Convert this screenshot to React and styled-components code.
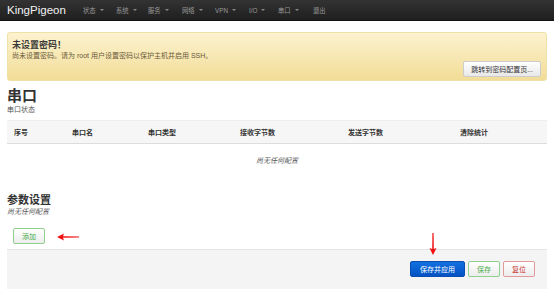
import React from "react";
import styled, { createGlobalStyle } from "styled-components";

const GlobalStyle = createGlobalStyle`
  body {
    margin: 0;
    background: #fff;
    font-family: "Liberation Sans", "Noto Sans CJK SC", sans-serif;
    color: #333;
  }
`;

const Page = styled.div`
  position: relative;
  width: 554px;
  height: 290px;
  overflow: hidden;
`;

const Navbar = styled.div`
  display: flex;
  align-items: center;
  height: 21px;
  padding-left: 7px;
  background: linear-gradient(#333, #1f1f1f);
  border-bottom: 1px solid #111;
  box-sizing: border-box;
`;

const Brand = styled.div`
  font-size: 11.5px;
  color: #f2f2f2;
  width: 76px;
`;

const Menu = styled.div`
  display: flex;
  align-items: center;
`;

const MenuItem = styled.div`
  display: flex;
  align-items: center;
  gap: 4px;
  font-size: 6.3px;
  color: #9a9a9a;
  width: ${({ w }) => w}px;
`;

const Caret = styled.span`
  width: 0;
  height: 0;
  border-left: 2px solid transparent;
  border-right: 2px solid transparent;
  border-top: 2px solid #888;
`;

const Main = styled.div`
  padding: 11px 7px 0;
`;

const Alert = styled.div`
  display: flex;
  flex-direction: column;
  height: 49px;
  box-sizing: border-box;
  padding: 7px 5px 3px 4px;
  background: linear-gradient(#fcf2cf, #f2dd97);
  border: 1px solid #efe0a8;
  border-radius: 3px;
`;

const AlertTitle = styled.div`
  font-size: 9px;
  font-weight: bold;
  color: #3a3a3a;
  line-height: 11px;
`;

const AlertText = styled.div`
  font-size: 7px;
  color: #6a5a3a;
  margin-top: 1px;
  line-height: 8px;
`;

const AlertActions = styled.div`
  display: flex;
  justify-content: flex-end;
  margin-top: auto;
`;

const Button = styled.div`
  display: flex;
  align-items: center;
  justify-content: center;
  height: 16px;
  box-sizing: border-box;
  padding: 0 ${({ pad }) => pad ?? 6}px;
  font-size: 7px;
  border-radius: 2px;
  border: 1px solid ${({ border }) => border};
  color: ${({ color }) => color};
  background: ${({ bg }) => bg};
`;

const Heading = styled.div`
  font-size: 15px;
  font-weight: bold;
  color: #333;
  margin-top: 6px;
  line-height: 18px;
`;

const SubHeading = styled.div`
  font-size: 11px;
  font-weight: bold;
  color: #333;
  line-height: 13px;
`;

const Desc = styled.div`
  font-size: 7px;
  color: #555;
  line-height: 9px;
  font-style: ${({ italic }) => (italic ? "italic" : "normal")};
`;

const TableHead = styled.div`
  display: grid;
  grid-template-columns: 58px 76px 92px 108px 112px 1fr;
  align-items: center;
  height: 22px;
  margin-top: 6px;
  padding-left: 7px;
  background: #f6f6f6;
  border-top: 1px solid #eee;
  border-bottom: 1px solid #ddd;
  font-size: 7px;
  font-weight: bold;
  color: #333;
`;

const Empty = styled.div`
  text-align: center;
  font-size: 7px;
  font-style: italic;
  color: #555;
  padding: 12px 0 0;
  line-height: 9px;
`;

const Section = styled.div`
  margin-top: 29px;
`;

const AddRow = styled.div`
  display: flex;
  padding: 12px 0 0 6px;
`;

const Footer = styled.div`
  display: flex;
  justify-content: flex-end;
  gap: 3px;
  height: 40px;
  margin-top: 5px;
  padding: 11px 12px 0 0;
  box-sizing: border-box;
  background: #f4f4f4;
  border-top: 1px solid #e4e4e4;
`;

const Arrow = styled.svg`
  position: absolute;
  left: ${({ x }) => x}px;
  top: ${({ y }) => y}px;
`;

const menu = [
  ["状态", true, 33],
  ["系统", true, 32],
  ["服务", true, 34],
  ["网络", true, 33],
  ["VPN", true, 34],
  ["I/O", true, 29],
  ["串口", true, 35],
  ["退出", false, 30],
];

const columns = ["序号", "串口名", "串口类型", "接收字节数", "发送字节数", "清除统计"];

export default function App() {
  return (
    <Page>
      <GlobalStyle />
      <Navbar>
        <Brand>KingPigeon</Brand>
        <Menu>
          {menu.map(([label, caret, w]) => (
            <MenuItem key={label} w={w}>
              {label}
              {caret && <Caret />}
            </MenuItem>
          ))}
        </Menu>
      </Navbar>
      <Main>
        <Alert>
          <AlertTitle>未设置密码！</AlertTitle>
          <AlertText>尚未设置密码。请为 root 用户设置密码以保护主机并启用 SSH。</AlertText>
          <AlertActions>
            <Button border="#ccc" color="#333" bg="linear-gradient(#fff, #e8e8e8)" pad={7}>
              跳转到密码配置页...
            </Button>
          </AlertActions>
        </Alert>
        <Heading>串口</Heading>
        <Desc>串口状态</Desc>
        <TableHead>
          {columns.map((c) => (
            <div key={c}>{c}</div>
          ))}
        </TableHead>
        <Empty>尚无任何配置</Empty>
        <Section>
          <SubHeading>参数设置</SubHeading>
          <Desc italic>尚无任何配置</Desc>
          <AddRow>
            <Button border="#8fd08f" color="#4cae4c" bg="linear-gradient(#fff, #ececec)" pad={8}>
              添加
            </Button>
          </AddRow>
        </Section>
        <Footer>
          <Button border="#0a4fb0" color="#fff" bg="linear-gradient(#1170e0, #0552c4)" pad={9}>
            保存并应用
          </Button>
          <Button border="#8fd08f" color="#4cae4c" bg="linear-gradient(#fff, #ececec)" pad={8}>
            保存
          </Button>
          <Button border="#e39a9a" color="#c9302c" bg="linear-gradient(#fff, #ececec)" pad={8}>
            复位
          </Button>
        </Footer>
      </Main>
      <Arrow x={56} y={233} width="24" height="8" viewBox="0 0 24 8">
        <path d="M1 4 L8 0.5 L7 3.2 L23 3.4 L23 4.6 L7 4.8 L8 7.5 Z" fill="#f01010" />
      </Arrow>
      <Arrow x={429} y={232} width="8" height="24" viewBox="0 0 8 24">
        <path d="M4 23 L0.5 16 L3.2 17 L3.4 1 L4.6 1 L4.8 17 L7.5 16 Z" fill="#f01010" />
      </Arrow>
    </Page>
  );
}
